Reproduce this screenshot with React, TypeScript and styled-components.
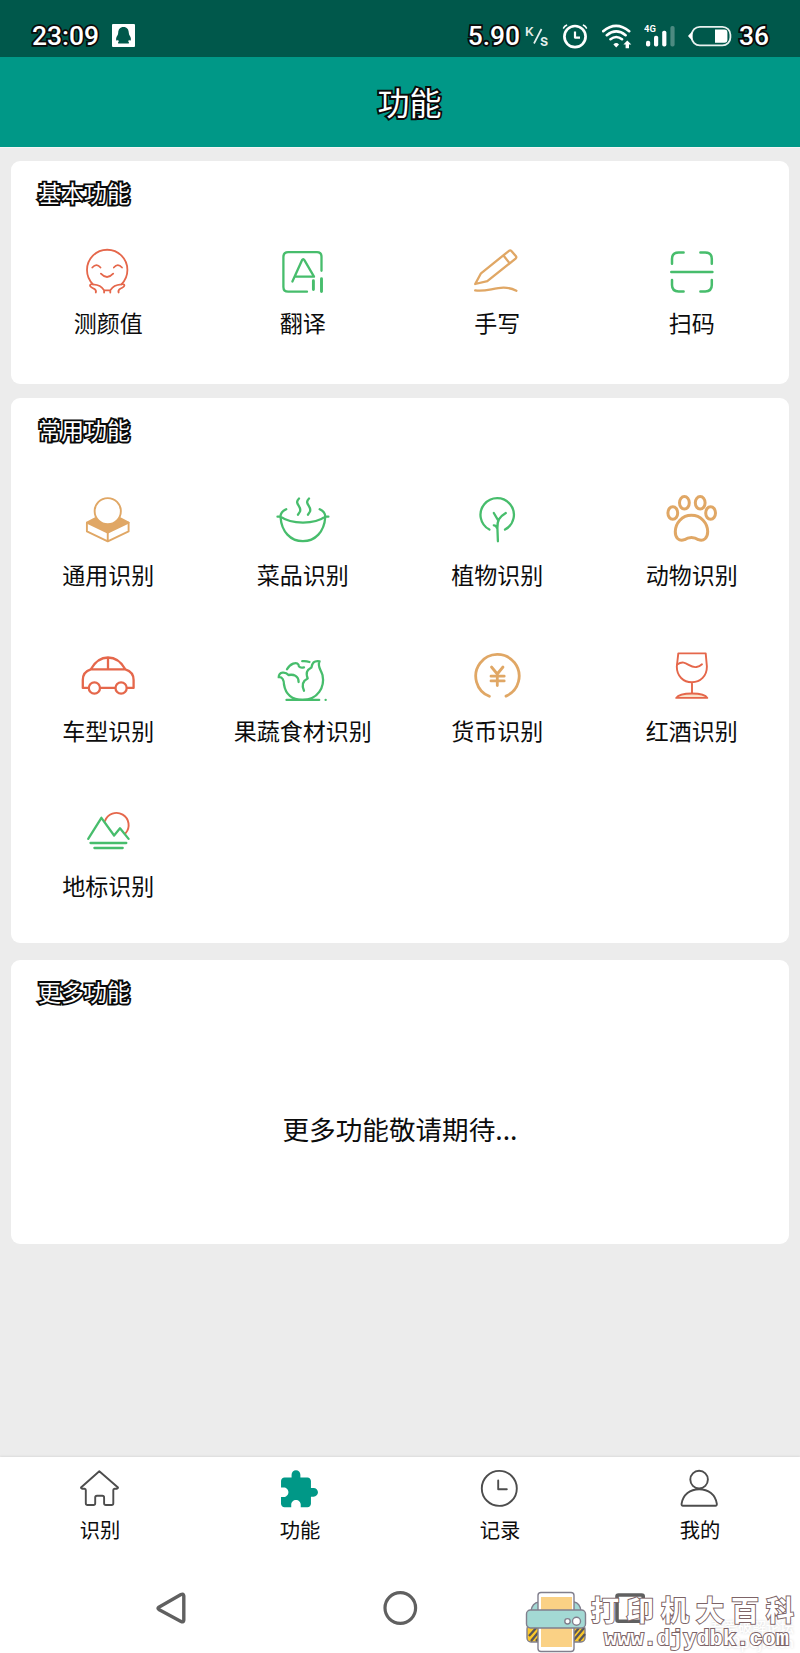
import React from 'react';
import styled, { createGlobalStyle } from 'styled-components';

const GREEN = '#47bd6c';
const RED = '#e5674b';
const TAN = '#e0a765';
const TEAL = '#009887';
const INK = '#4d4d4d';

const GlobalStyle = createGlobalStyle`
  * { box-sizing: border-box; }
  html, body { margin: 0; padding: 0; }
  body {
    font-family: Roboto, "Noto Sans CJK SC", sans-serif;
    color: #0c0c0c;
    background: #ececec;
  }
  svg { display: block; flex: none; }
`;

const Screen = styled.div`
  position: relative;
  width: 800px;
  height: 1653px;
  display: flex;
  flex-direction: column;
  overflow: hidden;
  background: #ececec;
`;

const StatusBar = styled.header`
  height: 57px;
  flex: none;
  display: flex;
  justify-content: space-between;
  align-items: center;
  padding: 14px 31px 0 32px;
  background: #00584b;
`;

const StatusGroup = styled.div<{ $gap: number }>`
  display: flex;
  align-items: center;
  gap: ${(p) => p.$gap}px;
`;

const StatusText = styled.span`
  font: 500 26.4px/30px Roboto, sans-serif;
  color: #fff;
  -webkit-text-stroke: 3.6px #0a0a0a;
  paint-order: stroke fill;
`;

const TitleBar = styled.div`
  height: 90px;
  flex: none;
  display: flex;
  align-items: center;
  justify-content: center;
  padding: 0 0 3px 19px;
  background: ${TEAL};
`;

const PageTitle = styled.h1`
  margin: 0;
  font: 400 32px/44px "Noto Sans CJK SC", sans-serif;
  color: #fff;
  -webkit-text-stroke: 3.8px #0a0a0a;
  paint-order: stroke fill;
`;

const Content = styled.main`
  flex: 1;
  padding: 13px 11px 0;
  border-top: 1px solid #f4f6f6;
`;

const Card = styled.section<{ $height: number; $gap?: number }>`
  height: ${(p) => p.$height}px;
  margin-bottom: ${(p) => p.$gap ?? 0}px;
  padding-top: 15px;
  border-radius: 9px;
  background: #fff;
`;

const CardTitle = styled.h2`
  margin: 0 0 0 27px;
  font: 400 23px/32px "Noto Sans CJK SC", sans-serif;
  color: #fff;
  -webkit-text-stroke: 3.8px #0a0a0a;
  paint-order: stroke fill;
`;

const FeatureGrid = styled.div<{ $top: number }>`
  display: grid;
  grid-template-columns: repeat(4, 1fr);
  row-gap: 53.5px;
  padding-top: ${(p) => p.$top}px;
`;

const FeatureItem = styled.div<{ $gap: number }>`
  display: flex;
  flex-direction: column;
  align-items: center;
  gap: ${(p) => p.$gap}px;
`;

const FeatureLabel = styled.span`
  font: 400 23px/32px "Noto Sans CJK SC", sans-serif;
  white-space: nowrap;
`;

const Placeholder = styled.p`
  margin: 102px 0 0;
  text-align: center;
  font: 400 26.6px/40px "Noto Sans CJK SC", sans-serif;
`;

const TabBar = styled.nav`
  height: 106px;
  flex: none;
  display: grid;
  grid-template-columns: repeat(4, 1fr);
  padding-top: 7px;
  background: #fff;
  box-shadow: 0 -1px 2px rgba(0, 0, 0, 0.07);
`;

const Tab = styled.div`
  display: flex;
  flex-direction: column;
  align-items: center;
  gap: 3px;
`;

const TabLabel = styled.span`
  font: 400 20.3px/28px "Noto Sans CJK SC", sans-serif;
`;

const SystemNav = styled.div`
  height: 90px;
  flex: none;
  display: flex;
  align-items: center;
  justify-content: space-between;
  padding: 0 150px 0 152px;
  background: #fff;
`;

const Watermark = styled.div`
  position: absolute;
  right: 0;
  bottom: 0;
  width: 275px;
  height: 62px;
  display: flex;
  align-items: flex-start;
  isolation: isolate;
`;

const WatermarkText = styled.div`
  display: flex;
  flex-direction: column;
  padding: 2px 0 0 4px;
`;

const WatermarkName = styled.span`
  font: 700 28px/32px "Noto Sans CJK SC", sans-serif;
  letter-spacing: 7px;
  white-space: nowrap;
  color: #fff;
  -webkit-text-stroke: 2px #7d6467;
  paint-order: stroke fill;
`;

const WatermarkUrl = styled.span`
  margin: 2px 0 0 13px;
  font: 700 22px/25px "Liberation Mono", monospace;
  white-space: nowrap;
  color: #fff;
  -webkit-text-stroke: 2px #7d6467;
  paint-order: stroke fill;
`;

const ForumMark = styled.div`
  position: absolute;
  z-index: -1;
  right: 6px;
  bottom: 3px;
  text-align: right;
  font: 500 14px/16px "Noto Sans CJK SC", sans-serif;
  color: #fff;
  text-shadow: 0 0 3px rgba(0, 0, 0, 0.16);
`;

const Stroked = styled.svg`
  fill: none;
  stroke-linecap: round;
  stroke-linejoin: round;
`;

type IconProps = { color: string; width?: number; children: React.ReactNode };

const FeatureIcon = ({ color, width = 2.3, children }: IconProps) => (
  <Stroked width="64" height="64" viewBox="0 0 64 64" stroke={color} strokeWidth={width}>
    {children}
  </Stroked>
);

const TabIcon = ({ children }: { children: React.ReactNode }) => (
  <Stroked width="48" height="48" viewBox="0 0 48 48" stroke={INK} strokeWidth={1.9}>
    {children}
  </Stroked>
);

const FaceIcon = () => (
  <FeatureIcon color={RED} width={1.8}>
    <path d="M17 44.3A20.2 20.2 0 1 1 45.4 44.3" />
    <path d="M16.3 27.5Q20.5 22.8 24.5 27.5M37.8 27.5Q41.8 22.8 46 27.5M24.9 33.7Q31 40.3 37.2 33.7" />
    <path d="M19.8 52.5Q20.6 50.3 18.2 48.8Q14 47 14 45.5Q14.2 43.9 17 44.3C23 44.8 25.2 46.3 28.1 50.3V52.5M28.1 50.3H34.3M34.3 52.5V50.3C37.2 46.3 39.4 44.8 45.4 44.3Q48.4 43.9 48.4 45.5Q48.3 47 44.2 48.8Q41.8 50.3 42.6 52.5" />
  </FeatureIcon>
);

const TranslateIcon = () => (
  <FeatureIcon color={GREEN}>
    <path d="M36 51.7H17.2Q12.4 51.7 12.4 47V17Q12.4 12.2 17.2 12.2H46Q50.5 12.2 50.5 16.8V30.8" />
    <path d="M21.4 41.5L31 20.2Q32.2 18.2 33.4 20.2L43 36.7H24.6" />
    <path d="M42.4 40.8V49.5M50.5 38.7V51.6" strokeWidth="2.9" />
  </FeatureIcon>
);

const WriteIcon = () => (
  <FeatureIcon color={TAN}>
    <path d="M10.2 44L16 33.3L44 10.8Q45.3 9.8 46.4 11L51 16.3Q51.8 17.6 50.6 18.6L22.3 41.2ZM38.7 15.7L43.9 22.4" />
    <path d="M10.2 50.3C23 53.2 36 42.8 51.4 50.7" />
  </FeatureIcon>
);

const ScanIcon = () => (
  <FeatureIcon color={GREEN} width={2.5}>
    <path d="M12 23.8V19Q12 12.4 18.6 12.4H23.6M40.4 12.4H45.2Q51.8 12.4 51.8 19V23.8M12 40V45Q12 51.4 18.6 51.4H23.6M40.4 51.4H45.2Q51.8 51.4 51.8 45V40M11.3 32H52.4" />
  </FeatureIcon>
);

const GeneralIcon = () => (
  <FeatureIcon color={TAN} width={1.9}>
    <path d="M10.9 34.6L19.5 30.2H44L52.6 34.6L31.75 44.6Z" fill={TAN} />
    <path d="M10.9 34.6V43.4L31.75 53.4L52.6 43.4V34.6M31.75 44.6V53.4" />
    <circle cx="31.75" cy="23.2" r="13.1" fill="#fff" />
  </FeatureIcon>
);

const DishIcon = () => (
  <FeatureIcon color={GREEN}>
    <path d="M6.5 28.7H9.6C20 36.5 44 36.5 54.2 28.7H57.4M9.5 29C9.3 25 11.5 23 15.2 21.3M54.3 29C54.3 25 52.5 23 48.7 21.3" />
    <path d="M9.6 29.5C10.5 43.5 19.5 53.2 31.9 53.2S53.3 43.5 54.2 29.5" />
    <path d="M28 10.5C22.5 16 31 18 29 23.5L27 26.7M38 10.5C32.5 16 41 18 39 23.5L37 26.7" />
  </FeatureIcon>
);

const PlantIcon = () => (
  <FeatureIcon color={GREEN}>
    <path d="M24.4 41.6A16.7 16.7 0 1 1 40 41.6" />
    <path d="M32.9 53.3L32.4 40C32.3 32 34 29.2 40.8 25M28.8 25L33.3 32.6M28.8 37.3Q31 37.2 32 40" />
  </FeatureIcon>
);

const PawIcon = () => (
  <FeatureIcon color={TAN} width={3}>
    <ellipse cx="24.4" cy="14.8" rx="4.9" ry="6.3" />
    <ellipse cx="40.2" cy="14.8" rx="4.9" ry="6.3" />
    <ellipse cx="12.8" cy="25" rx="4.9" ry="6.3" />
    <ellipse cx="50.6" cy="25" rx="4.9" ry="6.3" />
    <path d="M31.4 27.2C22 27.2 15.5 35 15.3 43.5C15.1 50 19 53.6 24.5 51.7C28.5 48.6 34.3 48.6 38.4 51.7C43.8 53.6 47.7 50 47.7 43.5C47.5 35 41 27.2 31.4 27.2Z" />
  </FeatureIcon>
);

const CarIcon = () => (
  <FeatureIcon color={RED}>
    <path d="M14.8 25.3C19.5 17 24.5 13.5 32 13.5S44.7 17 49.3 25.3M32 13.5V25.3M14.8 25.3H49.3C55 27 57.6 31 57.6 36V43.9H51M39 43.9H24.3M12.5 43.9H6.8V36C6.8 31 9.3 27 14.8 25.3" />
    <circle cx="18.4" cy="44" r="5.6" />
    <circle cx="45.1" cy="44" r="5.6" />
  </FeatureIcon>
);

const CabbageIcon = () => (
  <FeatureIcon color={GREEN}>
    <path d="M15.5 55.9H48.2M54.6 55.9H54.7" />
    <path d="M27.6 38C27.6 32 23 30 17.5 31C14.5 27.5 8 27.5 7.7 33.2C11.5 32.8 12.8 36 13 40.5C14.5 50 21 55.9 31.6 55.9C47 55.9 54 43 51.5 31C49.5 25 46 22 48.6 17.3C42.5 16.5 41.5 19 40.4 23.5C36 26 34.5 28.5 36.7 34.5C31.5 37 30.5 41 33 46.8" />
    <path d="M16 25.3C19 19.5 25.5 17.5 27.4 20.5C27.5 23.5 30 24 33 23.3M31.2 17.2Q35 16.8 38.5 18" />
  </FeatureIcon>
);

const CurrencyIcon = () => (
  <FeatureIcon color={TAN} width={2.8}>
    <path d="M24.4 52.3A21.7 21.7 0 1 1 41 52.1" />
    <path d="M26.5 23L32.3 30L38 23M32.3 30V41.5M26 32.2H39.2M26 36.9H39.2" strokeWidth="2.8" />
  </FeatureIcon>
);

const WineIcon = () => (
  <FeatureIcon color={RED} width={1.9}>
    <path d="M18.3 9.4H45.7L46.9 22.5C46.9 32 40.5 38.3 31.9 38.3S16.8 32 16.8 22.5ZM32 38.3V49.3" />
    <path d="M17.2 20.5C26 14.5 29 24.5 36.5 23Q39.5 22.6 42 20.3" />
    <path d="M16.2 53.9C20 48 44 48 47.3 53.9Z" fill="#f9e3cc" />
  </FeatureIcon>
);

const LandmarkIcon = () => (
  <FeatureIcon color={GREEN}>
    <path d="M29 21.9A12.2 12.2 0 1 1 49.6 34.2" stroke={RED} strokeWidth="1.9" />
    <path d="M12.2 39.9L25.4 18.8L38.1 36.5L44 29.3L52.6 39.9M14.5 44H50.3M18.4 49H46.7" />
  </FeatureIcon>
);

const HomeIcon = () => (
  <TabIcon>
    <path d="M23.3 7.2L5 23.5Q5 25 8.5 24.7Q9.8 24.8 9.8 26V39.2Q9.8 41 11.6 41H17.4Q19.2 41 19.2 39.2V33.5Q19.2 31.7 21 31.7H26.3Q28.1 31.7 28.1 33.5V39.2Q28.1 41 29.9 41H35.5Q37.3 41 37.3 39.2V26Q37.3 24.8 38.6 24.7Q42 25 42 23.5Z" />
  </TabIcon>
);

const PuzzleIcon = () => (
  <svg width="48" height="48" viewBox="0 0 48 48" fill={TEAL}>
    <path
      transform="translate(1.5 4.6) scale(1.76)"
      d="M20.5 11H19V7c0-1.1-.9-2-2-2h-4V3.5C13 2.12 11.88 1 10.5 1S8 2.12 8 3.5V5H4c-1.1 0-1.99.9-1.99 2v3.8H3.5c1.49 0 2.7 1.21 2.7 2.7s-1.21 2.7-2.7 2.7H2V20c0 1.1.9 2 2 2h3.8v-1.5c0-1.49 1.21-2.7 2.7-2.7 1.49 0 2.7 1.21 2.7 2.7V22H17c1.1 0 2-.9 2-2v-4h1.5c1.38 0 2.5-1.12 2.5-2.5S21.88 11 20.5 11z"
    />
  </svg>
);

const HistoryIcon = () => (
  <TabIcon>
    <circle cx="23.3" cy="24.4" r="17.5" />
    <path d="M22.2 16.4V25.3H30.8" />
  </TabIcon>
);

const UserIcon = () => (
  <TabIcon>
    <circle cx="23.1" cy="15.6" r="8.8" />
    <path d="M7 41.7Q5.3 41.7 5.6 39.7C7 30.7 14 25.2 23.2 25.2S39.4 30.7 40.8 39.7Q41.1 41.7 39.4 41.7Z" />
  </TabIcon>
);

const QQIcon = () => (
  <svg width="23" height="23" viewBox="0 0 23 23">
    <rect width="23" height="23" rx="1" fill="#fff" />
    <path
      fill="#00584b"
      d="M11.5 3C8 3 6.2 5.6 6.2 9L5.8 10.8C4.2 13 3.6 15.5 4.5 16.6Q5 17 6 15.8L6.8 17.4Q5 19.3 7.2 19.6H15.8Q18 19.3 16.2 17.4L17 15.8Q18 17 18.5 16.6C19.4 15.5 18.8 13 17.2 10.8L16.8 9C16.8 5.6 15 3 11.5 3Z"
    />
  </svg>
);

const SpeedUnit = () => (
  <svg width="30" height="30" viewBox="0 0 30 30" fill="#e6efed" fontFamily="Roboto, sans-serif" fontWeight="500">
    <text x="5" y="14.8" fontSize="13.5">K</text>
    <text x="20" y="24.6" fontSize="16">s</text>
    <path d="M21.5 8L14 22.5" stroke="#e6efed" strokeWidth="1.7" />
  </svg>
);

const AlarmIcon = () => (
  <Stroked width="26" height="26" viewBox="0 0 26 26" stroke="#fff" strokeWidth="2.7">
    <circle cx="13" cy="13.6" r="10.6" />
    <path d="M13 8.6V14.6H18" strokeWidth="2.2" strokeLinecap="butt" />
    <path d="M1.6 5Q2.4 3 4.5 2.2M24.4 5Q23.6 3 21.5 2.2" strokeWidth="1.6" />
  </Stroked>
);

const WifiIcon = () => (
  <Stroked width="30" height="26" viewBox="0 0 30 26" stroke="#fff" strokeWidth="2.6" strokeLinecap="butt">
    <path d="M1.2 8.2Q14 -2.5 27.2 8.2M4.8 12.2Q14.2 4.6 23.6 12.2M8.5 16.2Q14.2 11.8 20 16.2" />
    <path d="M11.4 21.4Q14.2 18.7 17 21.4L14.2 24.6Z" fill="#fff" stroke="none" />
    <path d="M25.3 17.4L29.3 21.6H27V25.2H23.6V21.6H21.4Z" fill="#fff" stroke="none" />
  </Stroked>
);

const SignalIcon = () => (
  <svg width="32" height="26" viewBox="0 0 32 26" fill="#fff">
    <text x="0" y="8.6" fontSize="9.4" fontWeight="700" fontFamily="Roboto, sans-serif">4G</text>
    <rect x="2" y="17.7" width="4.2" height="5.8" rx="1.8" />
    <rect x="10" y="12.8" width="4.2" height="10.7" rx="1.8" />
    <rect x="18.2" y="7.8" width="4.2" height="15.7" rx="1.8" />
    <rect x="26.4" y="3" width="4.2" height="20.5" rx="1.8" opacity="0.3" />
  </svg>
);

const BatteryIcon = () => (
  <svg width="44" height="24" viewBox="0 0 44 24">
    <rect x="3.8" y="2.8" width="38.6" height="18.6" rx="8" fill="none" stroke="#e8f1ef" strokeWidth="1.8" />
    <path d="M4 7.5L0 12L4 16.5Z" fill="#fff" />
    <path d="M27 5.6H36.5Q39.4 5.6 39.4 8.6V15.8Q39.4 18.8 36.5 18.8H27Z" fill="#fff" />
  </svg>
);

const BackIcon = () => (
  <Stroked width="40" height="40" viewBox="0 0 40 40" stroke="#606060" strokeWidth="3.4">
    <path d="M6.8 19.2L29 6.5Q31.6 5.4 31.8 8V32Q31.6 34.6 29 33.4L6.8 21.4Q5.2 20.3 6.8 19.2Z" />
  </Stroked>
);

const CircleIcon = () => (
  <Stroked width="40" height="40" viewBox="0 0 40 40" stroke="#606060" strokeWidth="3.2">
    <circle cx="19.3" cy="20" r="15.3" />
  </Stroked>
);

const RecentsIcon = () => (
  <Stroked width="40" height="40" viewBox="0 0 40 40" stroke="#606060" strokeWidth="3.6">
    <rect x="7" y="7" width="26.2" height="26.2" rx="1.5" />
  </Stroked>
);

const PrinterIcon = () => (
  <svg width="62" height="62" viewBox="0 0 62 62" stroke="#817f8d" strokeWidth="1.4">
    <path d="M6 20Q7 12 14 11H49Q55 12 56 20" fill="#a3d9d4" />
    <rect x="2" y="34" width="58" height="17" rx="4" fill="#fbc82b" />
    <path d="M4 45L12 36M6 50L16 38M11 50L17 43M47 45L54 37M48 50L59 37M54 50L60 43" stroke="#58565a" strokeWidth="2.3" />
    <rect x="13" y="1.5" width="36" height="59" rx="3" fill="#fff" />
    <rect x="16" y="6" width="31" height="50" fill="#fad185" stroke="none" />
    <rect x="1.5" y="19" width="59" height="18" rx="4" fill="#a3d9d4" />
    <circle cx="42.5" cy="30.3" r="2.7" fill="#fff" />
    <circle cx="51.5" cy="30.3" r="4" fill="#fff" />
  </svg>
);

type Feature = { label: string; Icon: React.FC };

const basicFeatures: Feature[] = [
  { label: '测颜值', Icon: FaceIcon },
  { label: '翻译', Icon: TranslateIcon },
  { label: '手写', Icon: WriteIcon },
  { label: '扫码', Icon: ScanIcon },
];

const commonFeatures: Feature[] = [
  { label: '通用识别', Icon: GeneralIcon },
  { label: '菜品识别', Icon: DishIcon },
  { label: '植物识别', Icon: PlantIcon },
  { label: '动物识别', Icon: PawIcon },
  { label: '车型识别', Icon: CarIcon },
  { label: '果蔬食材识别', Icon: CabbageIcon },
  { label: '货币识别', Icon: CurrencyIcon },
  { label: '红酒识别', Icon: WineIcon },
  { label: '地标识别', Icon: LandmarkIcon },
];

const tabs: Feature[] = [
  { label: '识别', Icon: HomeIcon },
  { label: '功能', Icon: PuzzleIcon },
  { label: '记录', Icon: HistoryIcon },
  { label: '我的', Icon: UserIcon },
];

const Features = ({ items, top, gap }: { items: Feature[]; top: number; gap: number }) => (
  <FeatureGrid $top={top}>
    {items.map(({ label, Icon }) => (
      <FeatureItem key={label} $gap={gap}>
        <Icon />
        <FeatureLabel>{label}</FeatureLabel>
      </FeatureItem>
    ))}
  </FeatureGrid>
);

export default function App() {
  return (
    <>
      <GlobalStyle />
      <Screen>
        <StatusBar>
          <StatusGroup $gap={13}>
            <StatusText>23:09</StatusText>
            <QQIcon />
          </StatusGroup>
          <StatusGroup $gap={12}>
            <StatusGroup $gap={0}>
              <StatusText>5.90</StatusText>
              <SpeedUnit />
            </StatusGroup>
            <StatusGroup $gap={14}>
              <AlarmIcon />
              <WifiIcon />
            </StatusGroup>
            <SignalIcon />
            <StatusGroup $gap={7}>
              <BatteryIcon />
              <StatusText>36</StatusText>
            </StatusGroup>
          </StatusGroup>
        </StatusBar>
        <TitleBar>
          <PageTitle>功能</PageTitle>
        </TitleBar>
        <Content>
          <Card $height={223} $gap={14}>
            <CardTitle>基本功能</CardTitle>
            <Features items={basicFeatures} top={32} gap={2} />
          </Card>
          <Card $height={545} $gap={17}>
            <CardTitle>常用功能</CardTitle>
            <Features items={commonFeatures} top={43} gap={6} />
          </Card>
          <Card $height={284}>
            <CardTitle>更多功能</CardTitle>
            <Placeholder>更多功能敬请期待...</Placeholder>
          </Card>
        </Content>
        <TabBar>
          {tabs.map(({ label, Icon }) => (
            <Tab key={label}>
              <Icon />
              <TabLabel>{label}</TabLabel>
            </Tab>
          ))}
        </TabBar>
        <SystemNav>
          <BackIcon />
          <CircleIcon />
          <RecentsIcon />
        </SystemNav>
        <Watermark>
          <ForumMark>
            吾爱破解论坛
            <br />
            52pojie.cn
          </ForumMark>
          <PrinterIcon />
          <WatermarkText>
            <WatermarkName>打印机大百科</WatermarkName>
            <WatermarkUrl>www.djydbk.com</WatermarkUrl>
          </WatermarkText>
        </Watermark>
      </Screen>
    </>
  );
}
